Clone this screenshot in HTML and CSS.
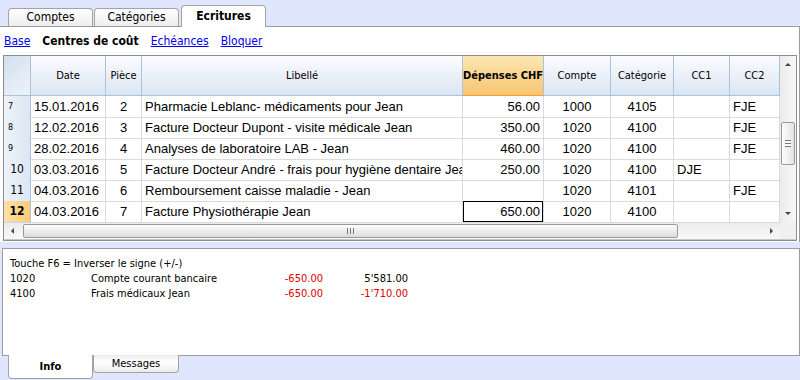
FILE: index.html
```html
<!DOCTYPE html>
<html>
<head>
    <title>Ecritures</title>
    <link rel="stylesheet" href="styles.css">
</head>
<body>
    <div class="tabbar">
        <div class="tab">Comptes</div>
        <div class="tab">Catégories</div>
        <div class="tab active">Ecritures</div>
    </div>

    <div class="panel">
        <div class="subnav">
            <a href="#">Base</a>
            <b>Centres de coût</b>
            <a href="#">Echéances</a>
            <a href="#">Bloquer</a>
        </div>

        <div class="grid">
            <div class="grid-main">
                <div class="rows">
                    <div class="row head">
                        <div class="hcell corner"></div>
                        <div class="hcell">Date</div>
                        <div class="hcell">Pièce</div>
                        <div class="hcell">Libellé</div>
                        <div class="hcell hot">Dépenses CHF</div>
                        <div class="hcell">Compte</div>
                        <div class="hcell">Catégorie</div>
                        <div class="hcell">CC1</div>
                        <div class="hcell">CC2</div>
                    </div>
                    <div class="row">
                        <div class="num small">7</div>
                        <div class="cell">15.01.2016</div>
                        <div class="cell center">2</div>
                        <div class="cell">Pharmacie Leblanc- médicaments pour Jean</div>
                        <div class="cell right">56.00</div>
                        <div class="cell center">1000</div>
                        <div class="cell center">4105</div>
                        <div class="cell"></div>
                        <div class="cell">FJE</div>
                    </div>
                    <div class="row">
                        <div class="num small">8</div>
                        <div class="cell">12.02.2016</div>
                        <div class="cell center">3</div>
                        <div class="cell">Facture Docteur Dupont - visite médicale Jean</div>
                        <div class="cell right">350.00</div>
                        <div class="cell center">1020</div>
                        <div class="cell center">4100</div>
                        <div class="cell"></div>
                        <div class="cell">FJE</div>
                    </div>
                    <div class="row">
                        <div class="num small">9</div>
                        <div class="cell">28.02.2016</div>
                        <div class="cell center">4</div>
                        <div class="cell">Analyses de laboratoire LAB - Jean</div>
                        <div class="cell right">460.00</div>
                        <div class="cell center">1020</div>
                        <div class="cell center">4100</div>
                        <div class="cell"></div>
                        <div class="cell">FJE</div>
                    </div>
                    <div class="row">
                        <div class="num">10</div>
                        <div class="cell">03.03.2016</div>
                        <div class="cell center">5</div>
                        <div class="cell">Facture Docteur André - frais pour hygiène dentaire Jean</div>
                        <div class="cell right">250.00</div>
                        <div class="cell center">1020</div>
                        <div class="cell center">4100</div>
                        <div class="cell">DJE</div>
                        <div class="cell"></div>
                    </div>
                    <div class="row">
                        <div class="num">11</div>
                        <div class="cell">04.03.2016</div>
                        <div class="cell center">6</div>
                        <div class="cell">Remboursement caisse maladie - Jean</div>
                        <div class="cell right"></div>
                        <div class="cell center">1020</div>
                        <div class="cell center">4101</div>
                        <div class="cell"></div>
                        <div class="cell">FJE</div>
                    </div>
                    <div class="row">
                        <div class="num current">12</div>
                        <div class="cell">04.03.2016</div>
                        <div class="cell center">7</div>
                        <div class="cell">Facture Physiothérapie Jean</div>
                        <div class="cell right selected">650.00</div>
                        <div class="cell center">1020</div>
                        <div class="cell center">4100</div>
                        <div class="cell"></div>
                        <div class="cell"></div>
                    </div>
                </div>

                <div class="vscroll">
                    <div class="sbtn"><span class="arrow up"></span></div>
                    <div class="vthumb"><span class="grip-v"></span></div>
                    <div class="sfill"></div>
                    <div class="sbtn"><span class="arrow down"></span></div>
                </div>
            </div>

            <div class="hscroll">
                <div class="sbtn wide"><span class="arrow left"></span></div>
                <div class="hthumb"><span class="grip-h"></span></div>
                <div class="sfill"></div>
                <div class="sbtn wide"><span class="arrow right"></span></div>
                <div class="corner-box"></div>
            </div>
        </div>
    </div>

    <div class="info">
        <div class="info-line">Touche F6 = Inverser le signe (+/-)</div>
        <div class="info-row">
            <span>1020</span>
            <span>Compte courant bancaire</span>
            <span class="amt neg">-650.00</span>
            <span class="amt">5'581.00</span>
        </div>
        <div class="info-row">
            <span>4100</span>
            <span>Frais médicaux Jean</span>
            <span class="amt neg">-650.00</span>
            <span class="amt neg">-1'710.00</span>
        </div>
    </div>

    <div class="bottomtabs">
        <div class="btab active">Info</div>
        <div class="btab">Messages</div>
    </div>
</body>
</html>
```

FILE: styles.css
```css
body {
    margin: 0;
    width: 800px;
    height: 380px;
    overflow: hidden;
    background-color: #dfe6fe;
    font-family: "DejaVu Sans Condensed", "DejaVu Sans", sans-serif;
    font-size: 11px;
    color: #000;
}

/* top tabs */
.tabbar {
    height: 26px;
    display: flex;
    align-items: flex-end;
    padding-left: 8px;
    box-sizing: border-box;
}
.tab {
    width: 85px;
    height: 18px;
    margin-right: 1px;
    box-sizing: border-box;
    border: 1px solid #a3a3a3;
    border-bottom: none;
    border-radius: 4px 4px 0 0;
    background: linear-gradient(#ffffff, #ededed);
    text-align: center;
    line-height: 17px;
    font-size: 12px;
}
.tab.active {
    height: 22px;
    margin-left: 1px;
    margin-bottom: -1px;
    position: relative;
    z-index: 1;
    background: #fff;
    font-weight: bold;
    line-height: 20px;
}

/* main panel */
.panel {
    height: 215px;
    background-color: #fff;
    border-top: 1px solid #9c9c9c;
    border-right: 1px solid #9c9c9c;
}
.subnav {
    height: 28px;
    display: flex;
    align-items: center;
    gap: 12px;
    padding-left: 4px;
    font-size: 12px;
}
.subnav a {
    color: #0000ee;
}

/* grid */
.grid {
    margin-left: 3px;
    width: 792px;
    border: 1px solid #8d8d8d;
}
.grid-main {
    display: flex;
}
.rows {
    width: 776px;
}
.row {
    display: grid;
    grid-template-columns: 27px 75px 36px 321px 81px 67px 63px 56px 50px;
    height: 21px;
}
.row.head {
    height: 40px;
}
.hcell {
    box-sizing: border-box;
    background: linear-gradient(#fbfcfe, #dbe5f2);
    border-right: 1px solid #a9c2dd;
    border-bottom: 1px solid #a9c2dd;
    text-align: center;
    line-height: 39px;
    white-space: nowrap;
    overflow: hidden;
}
.hcell.corner {
    background: linear-gradient(135deg, #d3dfef, #eef3fa);
}
.hcell.hot {
    background: linear-gradient(#fbe7b3, #f8c470);
    border-bottom-color: #efa22e;
    font-weight: bold;
}
.cell {
    box-sizing: border-box;
    border-right: 1px solid #dadada;
    border-bottom: 1px solid #dadada;
    padding: 0 3px;
    font-family: "Liberation Sans", Arial, sans-serif;
    font-size: 13px;
    line-height: 21px;
    white-space: nowrap;
    overflow: hidden;
}
.cell.center {
    text-align: center;
}
.cell.right {
    text-align: right;
}
.cell.selected {
    box-shadow: inset 0 0 0 1px #000;
}
.num {
    box-sizing: border-box;
    background: linear-gradient(to right, #eef3fa, #dce6f3);
    border-right: 1px solid #a9c2dd;
    border-bottom: 1px solid #cad8ea;
    text-align: center;
    line-height: 21px;
    font-size: 12px;
}
.num.small {
    font-size: 9px;
    text-align: left;
    padding-left: 4px;
}
.num.current {
    background: linear-gradient(to right, #fde1a6, #fbcb78);
    font-weight: bold;
}

/* scrollbars */
.vscroll {
    width: 16px;
    height: 166px;
    display: flex;
    flex-direction: column;
    background: linear-gradient(to right, #ebebeb, #f8f8f8);
}
.sbtn {
    height: 17px;
    display: flex;
    align-items: center;
    justify-content: center;
}
.sbtn.wide {
    width: 17px;
}
.sfill {
    flex: 1;
}
.arrow {
    width: 0;
    height: 0;
    border: 3px solid transparent;
}
.arrow.up {
    border-bottom-color: #444;
    border-top-width: 0;
}
.arrow.down {
    border-top-color: #444;
    border-bottom-width: 0;
}
.arrow.left {
    border-right-color: #444;
    border-left-width: 0;
}
.arrow.right {
    border-left-color: #444;
    border-right-width: 0;
}
.vthumb {
    margin: 49px 0 0 1px;
    width: 14px;
    height: 43px;
    box-sizing: border-box;
    border: 1px solid #9a9a9a;
    border-radius: 2px;
    background: linear-gradient(to right, #fdfdfd, #e2e2e2);
    display: flex;
    align-items: center;
    justify-content: center;
}
.grip-v {
    width: 6px;
    height: 5px;
    border-top: 1px solid #777;
    border-bottom: 1px solid #777;
    background: linear-gradient(#fff 0 1px, #777 1px 2px, #fff 2px);
    background-size: 100% 5px;
    background-repeat: no-repeat;
    background-position: 0 1px;
}
.hscroll {
    height: 17px;
    display: flex;
    align-items: center;
    background: linear-gradient(#ebebeb, #f8f8f8);
    border-bottom: 1px solid #c8c8c8;
}
.hthumb {
    margin-left: 2px;
    width: 655px;
    height: 14px;
    box-sizing: border-box;
    border: 1px solid #9a9a9a;
    border-radius: 2px;
    background: linear-gradient(#fdfdfd, #dcdcdc);
    display: flex;
    align-items: center;
    justify-content: center;
}
.grip-h {
    width: 5px;
    height: 6px;
    border-left: 1px solid #777;
    border-right: 1px solid #777;
    background: linear-gradient(to right, transparent 2px, #777 2px 3px, transparent 3px);
}
.corner-box {
    width: 16px;
    height: 17px;
    background: #f0f0f0;
}

/* info panel */
.info {
    margin: 6px 0 0 2px;
    height: 108px;
    box-sizing: border-box;
    border: 1px solid #9c9c9c;
    background-color: #fff;
    padding: 7px 0 0 7px;
}
.info-line {
    height: 15px;
    line-height: 15px;
}
.info-row {
    display: grid;
    grid-template-columns: 81px 170px 62px 85px;
    height: 15px;
    line-height: 15px;
}
.amt {
    text-align: right;
}
.neg {
    color: #e00000;
}

/* bottom tabs */
.bottomtabs {
    display: flex;
    align-items: flex-start;
    padding-left: 8px;
}
.btab {
    width: 86px;
    height: 18px;
    margin-top: -1px;
    box-sizing: border-box;
    border: 1px solid #a3a3a3;
    border-top: none;
    border-radius: 0 0 4px 4px;
    background: linear-gradient(#ececec, #ffffff 40%, #ececec);
    text-align: center;
    line-height: 17px;
}
.btab.active {
    height: 24px;
    width: 85px;
    background: #fff;
    font-weight: bold;
    line-height: 24px;
    position: relative;
}
```
